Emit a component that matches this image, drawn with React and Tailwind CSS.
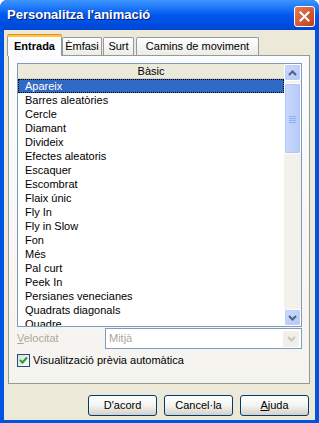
const items = [
  "Apareix",
  "Barres aleatòries",
  "Cercle",
  "Diamant",
  "Divideix",
  "Efectes aleatoris",
  "Escaquer",
  "Escombrat",
  "Flaix únic",
  "Fly In",
  "Fly in Slow",
  "Fon",
  "Més",
  "Pal curt",
  "Peek In",
  "Persianes venecianes",
  "Quadrats diagonals",
  "Quadre",
];

const Chevron = ({ up, color = "#4D6185" }) => (
  <svg width="9" height="6" viewBox="0 0 9 6">
    <path
      d={up ? "M1 5 L4.5 1.5 L8 5" : "M1 1 L4.5 4.5 L8 1"}
      fill="none"
      stroke={color}
      strokeWidth="2"
    />
  </svg>
);

const ScrollBtn = ({ up }) => (
  <div className="h-[17px] w-[17px] flex items-center justify-center rounded-[2px] border border-[#fff] bg-gradient-to-br from-[#CDDBFC] to-[#B3C7F5] shadow-[inset_0_0_0_1px_#BCCEF7]">
    <Chevron up={up} />
  </div>
);

const Tab = ({ label, active, w, ml }) =>
  active ? (
    <div
      className={`relative z-10 -mb-px h-[22px] ${w} ml-[-1px] flex items-center justify-center border border-b-0 border-[#919B9C] bg-[#FCFCFE] rounded-t-[3px] font-bold text-black`}
    >
      <div className="absolute left-[-1px] right-[-1px] top-[-1px] h-[3px] rounded-t-[3px] bg-[#FFC83C] border-t border-[#E68B2C]" />
      <span className="mt-[2px]">{label}</span>
    </div>
  ) : (
    <div
      className={`h-[18px] ${w} ${ml} flex items-center justify-center border border-b-0 border-[#919B9C] bg-gradient-to-b from-[#FFFFFF] to-[#ECEBE6] rounded-t-[2px] text-black`}
    >
      {label}
    </div>
  );

const Button = ({ children }) => (
  <button className="h-[21px] w-[69px] rounded-[3px] border border-[#003C74] bg-gradient-to-b from-[#FFFFFF] via-[#F4F4F0] to-[#D6D0C5] text-[11px] text-black">
    {children}
  </button>
);

export default function App() {
  return (
    <div
      className="w-[319px] h-[423px] bg-[#0054E3] rounded-t-[7px] flex flex-col overflow-hidden text-[11px]"
      style={{ fontFamily: "'Liberation Sans', Arial, sans-serif" }}
    >
      {/* title bar */}
      <div className="h-[30px] shrink-0 flex items-center justify-between pl-[7px] pr-[4px] rounded-t-[7px] bg-gradient-to-b from-[#3D95FF] via-[#0058EE] to-[#0046D5]">
        <span className="text-white font-bold text-[13px] [text-shadow:1px_1px_0_#0A1E6E]">
          Personalitza l'animació
        </span>
        <div className="h-[21px] w-[21px] mt-[2px] rounded-[3px] border border-white bg-gradient-to-br from-[#E37C5A] to-[#C23C10] flex items-center justify-center">
          <svg width="11" height="11" viewBox="0 0 11 11">
            <path d="M1.5 1.5 L9.5 9.5 M9.5 1.5 L1.5 9.5" stroke="#fff" strokeWidth="2" strokeLinecap="square" />
          </svg>
        </div>
      </div>

      {/* body */}
      <div className="flex-1 mx-[4px] mb-[3px] bg-[#ECE9D8] flex flex-col pt-[4px] pl-[4px] pr-[5px]">
        {/* tabs */}
        <div className="flex items-end text-[11px]">
          <Tab label="Entrada" active w="w-[55px]" />
          <Tab label="Èmfasi" w="w-[40px]" ml="ml-0" />
          <Tab label="Surt" w="w-[31px]" ml="ml-[1px]" />
          <Tab label="Camins de moviment" w="w-[123px]" ml="ml-[2px]" />
        </div>

        {/* panel */}
        <div className="h-[329px] border border-[#919B9C] bg-gradient-to-b from-[#FCFCFE] to-[#F4F3EE] pl-[8px] pr-[7px] pt-[7px] flex flex-col">
          {/* list */}
          <div className="h-[264px] shrink-0 border border-[#7F9DB9] bg-white flex overflow-hidden">
            <div className="flex-1 flex flex-col overflow-hidden">
              <div className="h-[15px] shrink-0 flex items-center justify-center bg-[#EBEADB] border-b border-[#D6D2C2] text-black">
                Bàsic
              </div>
              <div className="flex flex-col">
                {items.map((it, i) => (
                  <div
                    key={it}
                    className={`h-[14px] shrink-0 leading-[14px] pl-[7px] ${
                      i === 0
                        ? "bg-[#316AC5] text-white outline-1 outline-dotted outline-offset-[-1px] outline-black"
                        : "text-black"
                    }`}
                  >
                    {it}
                  </div>
                ))}
              </div>
            </div>
            {/* scrollbar */}
            <div className="w-[17px] shrink-0 bg-[#F3F1EC] flex flex-col justify-between">
              <div className="flex flex-col">
                <ScrollBtn up />
                <div className="mt-[2px] h-[71px] w-[17px] rounded-[2px] border border-[#fff] bg-gradient-to-r from-[#C9D8FC] to-[#B6CAF8] shadow-[inset_0_0_0_1px_#B1C6F6] flex items-center justify-center">
                  <svg width="7" height="8" viewBox="0 0 7 8">
                    <path d="M0 1.5 H7 M0 3.5 H7 M0 5.5 H7 M0 7.5 H7" stroke="#8CB0F8" strokeWidth="1" />
                  </svg>
                </div>
              </div>
              <ScrollBtn />
            </div>
          </div>

          {/* speed */}
          <div className="mt-[1px] flex items-center">
            <span className="w-[88px] text-[#ACA899]">
              <span className="underline">V</span>elocitat
            </span>
            <div className="flex-1 h-[21px] border border-[#7F9DB9] bg-white flex items-center justify-between pl-[3px] pr-[2px]">
              <span className="text-[#ACA899]">Mitjà</span>
              <div className="h-[16px] w-[16px] rounded-[2px] bg-[#F0EFE9] flex items-center justify-center">
                <Chevron color="#C9C7BA" />
              </div>
            </div>
          </div>

          {/* preview */}
          <div className="mt-[3px] flex items-center gap-[3px]">
            <div className="h-[13px] w-[13px] border border-[#1C5180] bg-gradient-to-br from-[#DCDBD5] to-[#FFFFFF] flex items-center justify-center">
              <svg width="9" height="9" viewBox="0 0 9 9">
                <path d="M1 4 L3.5 6.5 L8 1.5" fill="none" stroke="#21A121" strokeWidth="2" />
              </svg>
            </div>
            <span className="text-black">Visualització prèvia automàtica</span>
          </div>
        </div>

        {/* buttons */}
        <div className="mt-[11px] flex justify-end gap-[7px] pr-[1px]">
          <Button>D'acord</Button>
          <Button>Cancel·la</Button>
          <Button>
            <span className="underline">A</span>juda
          </Button>
        </div>
      </div>
    </div>
  );
}
